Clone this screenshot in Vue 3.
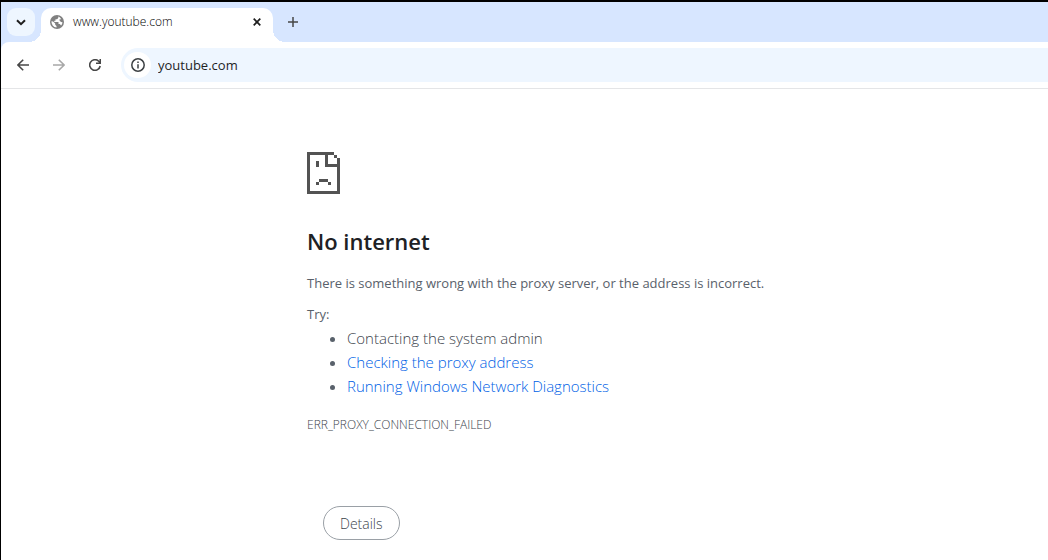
<script setup>
import { ref } from 'vue'

const address = ref('youtube.com')
const suggestions = [
  { text: 'Contacting the system admin', link: false },
  { text: 'Checking the proxy address', link: true },
  { text: 'Running Windows Network Diagnostics', link: true },
]
</script>

<template>
  <div class="window">
    <header>
      <div class="tabstrip">
        <button class="tab-search" aria-label="Search tabs">
          <svg width="10" height="7" viewBox="0 0 10 7"><path d="M1 1.2 5 5.2 9 1.2" fill="none" stroke="#1f1f1f" stroke-width="2" /></svg>
        </button>
        <div class="tab">
          <svg class="globe" width="14" height="14" viewBox="0 0 14 14">
            <circle cx="7" cy="7" r="7" fill="#808080" />
            <path d="M8.300 1.500V3L7 4.200H5.500v1.500H4.300v1.200h4.200v2h1.300l1.300 1.600A5.500 5.500 0 0 0 12.500 7.200L11 7 9.500 5.600V4.200h1.700A5.500 5.500 0 0 0 8.300 1.500ZM1.500 6.300A5.500 5.500 0 0 0 6.500 12.500V10.900L5.200 9.800V8.600L3 6.600Z" fill="#fff" />
          </svg>
          <span class="tab-title">www.youtube.com</span>
          <button class="close" aria-label="Close tab">
            <svg width="8" height="8" viewBox="0 0 8 8"><path d="m.7.7 6.600 6.600m0-6.600L.7 7.300" stroke="#1f1f1f" stroke-width="1.700" /></svg>
          </button>
        </div>
        <button class="new-tab" aria-label="New tab">
          <svg width="10" height="10" viewBox="0 0 10 10"><path d="M0 5h10M5 0v10" stroke="#474747" stroke-width="1.500" /></svg>
        </button>
      </div>
      <nav class="toolbar">
        <button class="nav" aria-label="Back">
          <svg width="12" height="12" viewBox="0 0 12 12"><path d="M12 6H1M6.200.7.900 6l5.300 5.300" fill="none" stroke="#474747" stroke-width="1.600" /></svg>
        </button>
        <button class="nav" aria-label="Forward" disabled>
          <svg width="12" height="12" viewBox="0 0 12 12"><path d="M0 6h11M5.800.7 11.100 6l-5.300 5.300" fill="none" stroke="#a8a8a8" stroke-width="1.600" /></svg>
        </button>
        <button class="nav" aria-label="Reload">
          <svg width="12" height="12" viewBox="0 0 12 12"><path d="M11.200 7A5.300 5.300 0 1 1 9.700 2.200L11.300 3.800M11.300 0v4.300H7" fill="none" stroke="#474747" stroke-width="1.600" /></svg>
        </button>
        <div class="omnibox">
          <button class="site-info" aria-label="View site information">
            <svg width="14" height="14" viewBox="0 0 14 14"><circle cx="7" cy="7" r="6.200" fill="none" stroke="#3c4043" stroke-width="1.500" /><path d="M7 6.200v4.300M7 3.500V5" stroke="#3c4043" stroke-width="1.500" /></svg>
          </button>
          <input v-model="address" type="text" aria-label="Address and search bar" spellcheck="false" />
        </div>
      </nav>
    </header>
    <main>
      <svg class="sad" width="33" height="42" viewBox="0 0 11 14" shape-rendering="crispEdges">
        <path d="M0 0h9v1H7v3h3V2h1v12H0ZM1 1v12h9V5H6V1ZM9 1h1v1H9ZM3 3h1v2H3ZM4 9h3v1H4ZM3 10h1v1H3ZM7 10h1v1H7Z" fill="#535353" fill-rule="evenodd" />
      </svg>
      <h1>No internet</h1>
      <p class="summary">There is something wrong with the proxy server, or the address is incorrect.</p>
      <p class="try">Try:</p>
      <ul>
        <li v-for="item in suggestions" :key="item.text">
          <a v-if="item.link" href="#">{{ item.text }}</a>
          <template v-else>{{ item.text }}</template>
        </li>
      </ul>
      <p class="code">ERR_PROXY_CONNECTION_FAILED</p>
      <button class="details">Details</button>
    </main>
  </div>
</template>

<style>
body {
  background: #fff;
}
</style>

<style scoped>
.window {
  box-sizing: border-box;
  min-height: 100vh;
  border-top: 2px solid #000;
  border-left: 1px solid #000;
  background: #fff;
  color: #59616b;
  font-family: "Open Sans", "Noto Sans", sans-serif;
}
button {
  display: flex;
  align-items: center;
  justify-content: center;
  padding: 0;
  border: 0;
  background: none;
  font-family: inherit;
}
header {
  background: #d7e6ff;
}
.tabstrip {
  display: flex;
  align-items: flex-start;
  height: 40px;
  padding: 6px 6px 0;
  box-sizing: border-box;
}
.tab-search {
  width: 28px;
  height: 28px;
  border-radius: 9px;
  background: #eef6ff;
}
.tab {
  position: relative;
  display: flex;
  align-items: center;
  box-sizing: border-box;
  width: 232px;
  height: 34px;
  margin-left: 6px;
  padding: 0 12px 6px 9px;
  border-radius: 10px 10px 0 0;
  background: #fff;
}
.tab::before,
.tab::after {
  content: "";
  position: absolute;
  bottom: 0;
  width: 12px;
  height: 12px;
}
.tab::before {
  right: 100%;
  background: radial-gradient(circle at 0 0, transparent 12px, #fff 12px);
}
.tab::after {
  left: 100%;
  background: radial-gradient(circle at 100% 0, transparent 12px, #fff 12px);
}
.tab-title {
  flex: 1;
  margin-left: 9px;
  color: #000;
  font-size: 12px;
  font-weight: 300;
  line-height: 18px;
}
.new-tab {
  width: 28px;
  height: 28px;
  margin-left: 6px;
}
.toolbar {
  display: flex;
  align-items: center;
  gap: 8px;
  padding: 6px 0 6px 8px;
  border-bottom: 1px solid #e4e5e7;
  border-radius: 8px 0 0 0;
  background: #fff;
}
.nav {
  width: 28px;
  height: 28px;
}
.omnibox {
  display: flex;
  flex: 1;
  align-items: center;
  height: 34px;
  margin-left: 4px;
  padding-left: 3px;
  border-radius: 17px 0 0 17px;
  background: #eef6ff;
}
.site-info {
  width: 27px;
  height: 26px;
  border-radius: 13px;
  background: #fff;
}
input {
  flex: 1;
  min-width: 0;
  margin-left: 7px;
  padding: 0;
  border: 0;
  outline: 0;
  background: none;
  color: #1f1f1f;
  font-family: inherit;
  font-size: 13px;
}
main {
  padding: 63px 24px 20px 306px;
}
.sad {
  display: block;
}
h1 {
  margin: 31px 0 0;
  color: #202124;
  font-size: 22px;
  font-weight: 600;
  line-height: 32px;
}
p {
  margin: 0;
}
.summary {
  margin-top: 15px;
  font-size: 13px;
  line-height: 22px;
}
.try {
  margin-top: 8px;
  font-size: 13px;
  line-height: 24px;
}
ul {
  margin: 0;
  padding-left: 40px;
  color: #3c434c;
  font-size: 15px;
  font-weight: 300;
  line-height: 24px;
}
li::marker {
  color: #59616b;
}
a {
  color: #005fe6;
  text-decoration: none;
}
.code {
  margin-top: 15px;
  color: #3c434c;
  font-size: 12px;
  font-weight: 300;
  line-height: 24px;
}
.details {
  box-sizing: border-box;
  height: 34px;
  margin: 69px 0 0 16px;
  padding: 0 16px;
  border: 1px solid #9aa0a6;
  border-radius: 17px;
  color: #3c434c;
  font-size: 14px;
  font-weight: 300;
}
</style>
